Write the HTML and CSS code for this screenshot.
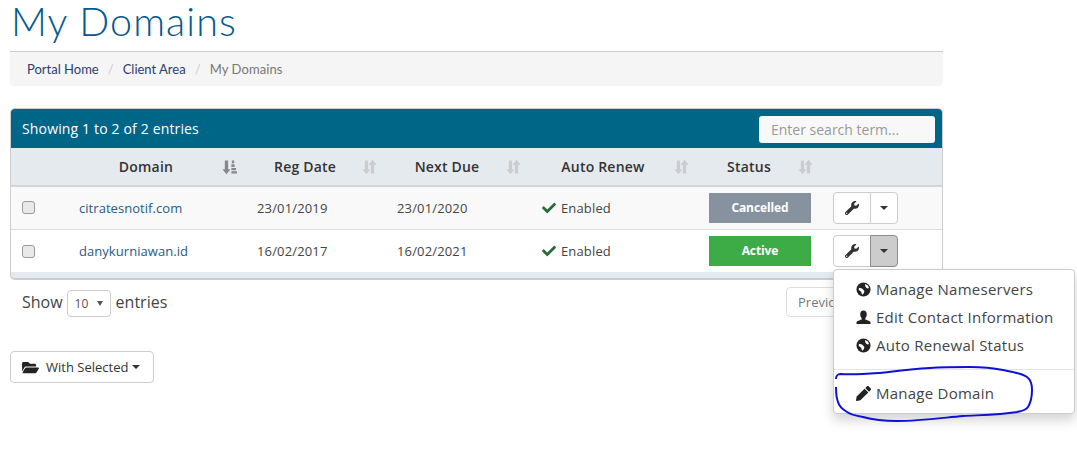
FILE: index.html
```html
<!DOCTYPE html>
<html lang="en">
<head>
  <meta charset="UTF-8">
  <title>My Domains</title>
  <link rel="stylesheet" href="styles.css">
</head>
<body>
  <svg width="0" height="0" class="defs">
    <symbol id="i-wrench" viewBox="0 0 512 512"><path d="M507.73 109.1c-2.24-9.03-13.54-12.09-20.12-5.51l-74.36 74.36-67.88-11.31-11.31-67.88 74.36-74.36c6.62-6.62 3.43-17.9-5.66-20.16-47.38-11.74-99.55.91-136.58 37.93-39.64 39.64-50.55 97.1-34.05 147.2L18.74 402.76c-24.99 24.99-24.99 65.51 0 90.5 24.99 24.99 65.51 24.99 90.5 0l213.21-213.21c50.12 16.71 107.47 5.68 147.37-34.22 37.07-37.07 49.7-89.32 37.91-136.73zM64 472c-13.25 0-24-10.75-24-24 0-13.26 10.75-24 24-24s24 10.74 24 24c0 13.25-10.75 24-24 24z"/></symbol>
    <symbol id="i-check" viewBox="0 0 512 512"><path d="M173.898 439.404l-166.4-166.4c-9.997-9.997-9.997-26.206 0-36.204l36.203-36.204c9.997-9.998 26.207-9.998 36.204 0L192 312.69 432.095 72.596c9.997-9.997 26.207-9.997 36.204 0l36.203 36.204c9.997 9.997 9.997 26.206 0 36.204l-294.4 294.401c-9.998 9.997-26.207 9.997-36.204-.001z"/></symbol>
    <symbol id="i-sort" viewBox="0 0 16 16"><path d="M3 1h3.500v9.500H9L4.750 15.800 .5 10.500H3zM9.500 5.500H7L11.250 .2l4.250 5.300H13v9.500H9.500z"/></symbol>
    <symbol id="i-sorted" viewBox="0 0 16 16"><path d="M3 1h3.500v9.500H9L4.750 15.800 .5 10.500H3zM10.500 1h2.500v3h-2.500zM10 5h3.500v3H10zM10 9h5v2.500h-5zM10 12.500h6V15h-6z"/></symbol>
    <symbol id="i-globe" viewBox="0 0 16 16"><circle cx="8" cy="8" r="7.500"/><path fill="#fff" d="M9.500 2l3 1.500 1.500 3-2 .5-2-2zM3 6l3.500 1 2.500 2.500-1 3-1.500 1-1-3-2.500-2z"/></symbol>
  </svg>

  <div class="page">
    <h1>My Domains</h1>
    <ol class="breadcrumb">
      <li><a href="#">Portal Home</a></li>
      <li><a href="#">Client Area</a></li>
      <li class="current">My Domains</li>
    </ol>

    <div class="panel">
      <div class="panel-head">
        <span>Showing 1 to 2 of 2 entries</span>
        <input class="search" type="text" placeholder="Enter search term...">
      </div>
      <table class="domains">
        <colgroup>
          <col class="c-check"><col class="c-domain"><col class="c-reg"><col class="c-due"><col class="c-renew"><col class="c-status"><col>
        </colgroup>
        <thead>
          <tr>
            <th></th>
            <th><div class="th"><span>Domain</span><svg class="sort sorted"><use href="#i-sorted"/></svg></div></th>
            <th><div class="th"><span>Reg Date</span><svg class="sort"><use href="#i-sort"/></svg></div></th>
            <th><div class="th"><span>Next Due</span><svg class="sort"><use href="#i-sort"/></svg></div></th>
            <th><div class="th"><span>Auto Renew</span><svg class="sort"><use href="#i-sort"/></svg></div></th>
            <th><div class="th"><span>Status</span><svg class="sort"><use href="#i-sort"/></svg></div></th>
            <th></th>
          </tr>
        </thead>
        <tbody>
          <tr class="odd">
            <td><input type="checkbox" class="check"></td>
            <td><a href="#">citratesnotif.com</a></td>
            <td>23/01/2019</td>
            <td>23/01/2020</td>
            <td><svg class="tick"><use href="#i-check"/></svg>Enabled</td>
            <td><span class="label label-cancelled">Cancelled</span></td>
            <td>
              <div class="btn-group">
                <button class="btn-tool"><svg class="wrench"><use href="#i-wrench"/></svg></button>
                <button class="btn-caret"><span class="caret"></span></button>
              </div>
            </td>
          </tr>
          <tr>
            <td><input type="checkbox" class="check"></td>
            <td><a href="#">danykurniawan.id</a></td>
            <td>16/02/2017</td>
            <td>16/02/2021</td>
            <td><svg class="tick"><use href="#i-check"/></svg>Enabled</td>
            <td><span class="label label-active">Active</span></td>
            <td>
              <div class="btn-group">
                <button class="btn-tool"><svg class="wrench"><use href="#i-wrench"/></svg></button>
                <button class="btn-caret open"><span class="caret"></span></button>
              </div>
            </td>
          </tr>
        </tbody>
      </table>
    </div>

    <div class="table-foot">
      <div class="length">
        Show
        <span class="select">10<i></i></span>
        entries
      </div>
      <div class="pager">
        <button>Previous</button>
      </div>
    </div>

    <button class="with-selected">
      <svg class="folder" viewBox="0 0 576 512"><path d="M572.694 292.093L500.27 416.248A63.997 63.997 0 0 1 444.989 448H45.025c-18.523 0-30.064-20.093-20.731-36.093l72.424-124.155A64 64 0 0 1 152 256h399.964c18.523 0 30.064 20.093 20.73 36.093zM152 224h328v-48c0-26.51-21.49-48-48-48H272l-64-64H48C21.49 64 0 85.49 0 112v278.046l69.077-118.418C86.214 242.25 117.989 224 152 224z"/></svg>
      With Selected
      <span class="caret"></span>
    </button>
  </div>

  <ul class="menu">
    <li><svg class="mi"><use href="#i-globe"/></svg>Manage Nameservers</li>
    <li>
      <svg class="mi" viewBox="0 0 16 16"><path d="M8 .5c2.300 0 3.500 1.800 3.500 4 0 1.700-.7 3.300-1.600 4.200v1.500c2 .8 5.600 1.600 5.600 3.300v1.500H.5v-1.500c0-1.700 3.600-2.500 5.600-3.300V8.700C5.200 7.800 4.500 6.200 4.500 4.500c0-2.200 1.200-4 3.500-4z"/></svg>Edit Contact Information
    </li>
    <li><svg class="mi"><use href="#i-globe"/></svg>Auto Renewal Status</li>
    <li class="divider"></li>
    <li>
      <svg class="mi" viewBox="0 0 512 512"><path d="M497.9 142.1l-46.1 46.1c-4.700 4.700-12.300 4.700-17 0l-111-111c-4.700-4.700-4.700-12.300 0-17l46.100-46.100c18.700-18.700 49.100-18.700 67.900 0l60.100 60.100c18.800 18.700 18.800 49.100 0 67.900zM284.200 99.800L21.600 362.400.4 483.900c-2.900 16.400 11.400 30.600 27.800 27.800l121.500-21.300 262.600-262.600c4.700-4.700 4.700-12.300 0-17l-111-111c-4.800-4.700-12.400-4.700-17.100 0z"/></svg>Manage Domain
    </li>
  </ul>

  <!-- hand drawn circle on top of the screenshot -->
  <svg class="scribble" viewBox="0 0 1077 449">
    <path d="M836 379C836 376 838 374 840 374C853 375 866 374 880 373C897 371 913 369 930 368C943 367 957 367 970 367C982 367 993 368 1003 370C1012 372 1021 373 1027 377C1031 380 1032 385 1032 390C1032 396 1031 402 1028 407C1025 411 1021 411 1017 412C999 415 981 415 963 416C941 418 919 421 897 421C885 421 874 420 863 417C857 416 851 415 847 412C842 409 839 406 838 402C836 397 836 392 836 387"/>
  </svg>
</body>
</html>
```

FILE: styles.css
```css
* {
  box-sizing: border-box;
}
html, body {
  height: 449px;
  overflow: hidden;
}
body {
  position: relative;
  margin: 0;
  font-family: "Open Sans", sans-serif;
  font-size: 13px;
  color: #333;
  background: #fff;
}
a {
  color: #1f5c86;
  text-decoration: none;
}
.defs {
  position: absolute;
}
.page {
  width: 933px;
  margin-left: 10px;
}
h1 {
  margin: 0;
  height: 52px;
  padding-left: 1px;
  border-bottom: 1px solid #ccc;
  font-family: Lato, sans-serif;
  font-weight: 300;
  font-size: 39.5px;
  line-height: 41px;
  letter-spacing: 1.1px;
  color: #035a8c;
}
.breadcrumb {
  display: flex;
  margin: 0 0 22px;
  padding: 0 17px;
  height: 34px;
  align-items: center;
  list-style: none;
  background: #f5f5f5;
  border-radius: 0 0 4px 4px;
  font-family: Lato, sans-serif;
  font-size: 13px;
}
.breadcrumb a {
  color: #2a3f6e;
}
.breadcrumb .current {
  color: #777;
  letter-spacing: .1px;
}
.breadcrumb li + li::before {
  content: "/";
  padding: 0 9px;
  color: #ccc;
}
.panel {
  height: 172px;
  border: 1px solid #ccc;
  border-bottom-width: 2px;
  border-radius: 5px;
  overflow: hidden;
  background: #e5eaef;
}
.panel-head {
  display: flex;
  justify-content: space-between;
  align-items: center;
  height: 39px;
  padding: 0 7px 0 11px;
  background: #006687;
  color: #fff;
  font-size: 14px;
  letter-spacing: .15px;
}
.panel-head span {
  margin-bottom: 1px;
}
.search {
  width: 176px;
  height: 27px;
  margin-top: 2px;
  padding: 0 12px;
  border: 0;
  border-radius: 3px;
  background: #f8f8f8;
  font-family: inherit;
  font-size: 14px;
}
.search::placeholder {
  color: #999;
  opacity: 1;
}
.domains {
  width: 100%;
  table-layout: fixed;
  border-collapse: collapse;
  letter-spacing: .15px;
}
.domains a {
  letter-spacing: .05px;
}
.c-check { width: 56px; }
.c-domain { width: 178px; }
.c-reg { width: 140px; }
.c-due { width: 144px; }
.c-renew { width: 168px; }
.c-status { width: 124px; }
.domains th {
  height: 38px;
  padding: 0 8px 0 12px;
  background: #e5eaef;
  border-bottom: 2px solid #d5d5d5;
  font-size: 14px;
  font-weight: 600;
  letter-spacing: .2px;
  color: #333;
}
.th {
  display: flex;
  align-items: center;
}
.th span {
  flex: 1;
  margin-right: 9px;
  text-align: center;
}
.sort {
  width: 15px;
  height: 16px;
  fill: #ccc;
}
.sorted {
  fill: #888;
}
.domains td {
  height: 43px;
  padding: 0 12px;
  background: #fff;
  border-bottom: 1px solid #ddd;
  color: #444;
}
.domains tr:last-child td {
  height: 43px;
  padding-top: 1px;
  border-bottom: 0;
}
.domains .odd td {
  background: #f9f9f9;
}
.domains td:first-child {
  padding-left: 11px;
}
.check {
  display: block;
  appearance: none;
  width: 13px;
  height: 13px;
  margin: 0;
  background: #e9e9e9;
  border: 1px solid #9a9a9a;
  border-radius: 3px;
}
.tick {
  width: 14px;
  height: 14px;
  margin-right: 5px;
  margin-left: 1px;
  vertical-align: -2px;
  fill: #2f6b3a;
}
.label {
  display: block;
  width: 102px;
  height: 30px;
  line-height: 29px;
  text-align: center;
  color: #fff;
  font-size: 12px;
  font-weight: 700;
  letter-spacing: -.1px;
}
.label-cancelled { background: #87929f; }
.label-active { background: #3dac47; }
.btn-group {
  display: flex;
}
.btn-group button {
  display: flex;
  align-items: center;
  justify-content: center;
  height: 32px;
  padding: 0;
  background: #fff;
  border: 1px solid #ccc;
}
.btn-tool {
  width: 38px;
  border-radius: 4px 0 0 4px;
}
.btn-caret {
  width: 28px;
  margin-left: -1px;
  border-radius: 0 4px 4px 0;
}
.btn-group .open {
  background: #ccc;
  border-color: #8c8c8c;
}
.wrench {
  width: 14px;
  height: 14px;
  fill: #333;
}
.caret {
  display: inline-block;
  border-top: 4px solid #333;
  border-left: 4px solid transparent;
  border-right: 4px solid transparent;
}
.table-foot {
  display: flex;
  justify-content: space-between;
  padding: 7px 0 0 12px;
}
.length {
  display: flex;
  align-items: center;
  gap: 5px;
  height: 30px;
  font-size: 16px;
  color: #444;
}
.select {
  display: flex;
  align-items: center;
  justify-content: space-between;
  width: 44px;
  height: 27px;
  margin-top: 3px;
  margin-left: -1px;
  padding: 0 7px;
  border: 1px solid #ccc;
  border-radius: 4px;
  font-size: 12px;
  color: #555;
}
.select i {
  border-top: 5px solid #555;
  border-left: 3px solid transparent;
  border-right: 3px solid transparent;
}
/* button runs on under the open menu, so it is clipped at the menu edge */
.pager {
  width: 47px;
  height: 30px;
  margin-right: 110px;
  overflow: hidden;
}
.pager button {
  width: 80px;
  height: 30px;
  padding: 0 0 0 11px;
  text-align: left;
  background: #fff;
  border: 1px solid #ddd;
  border-radius: 4px 0 0 4px;
  font-family: inherit;
  font-size: 13px;
  color: #777;
}
.with-selected {
  display: flex;
  align-items: center;
  width: 144px;
  height: 32px;
  margin-top: 34px;
  padding: 0 11px;
  background: #fff;
  border: 1px solid #ccc;
  border-radius: 4px;
  font-family: inherit;
  font-size: 13px;
  color: #333;
}
.folder {
  width: 17px;
  height: 15px;
  margin-right: 7px;
  fill: #222;
}
.with-selected .caret {
  margin-left: 4px;
}
.menu {
  position: absolute;
  left: 833px;
  top: 269px;
  width: 242px;
  height: 145px;
  margin: 0;
  padding: 5px 0;
  list-style: none;
  background: #fff;
  border: 1px solid #ccc;
  border-radius: 4px;
  box-shadow: 0 6px 12px rgba(0, 0, 0, .175);
  font-size: 15px;
  letter-spacing: .25px;
  color: #444;
}
.menu li {
  display: flex;
  align-items: center;
  height: 28px;
  padding-left: 22px;
  white-space: nowrap;
}
.menu .divider {
  height: 1px;
  margin: 10px 0 9px;
  padding: 0;
  background: #e5e5e5;
}
.mi {
  width: 15px;
  height: 15px;
  margin-right: 5px;
  fill: #222;
}
.scribble {
  position: absolute;
  left: 0;
  top: 0;
  width: 1077px;
  height: 449px;
  pointer-events: none;
}
.scribble path {
  fill: none;
  stroke: #1010d4;
  stroke-width: 2;
}
```
